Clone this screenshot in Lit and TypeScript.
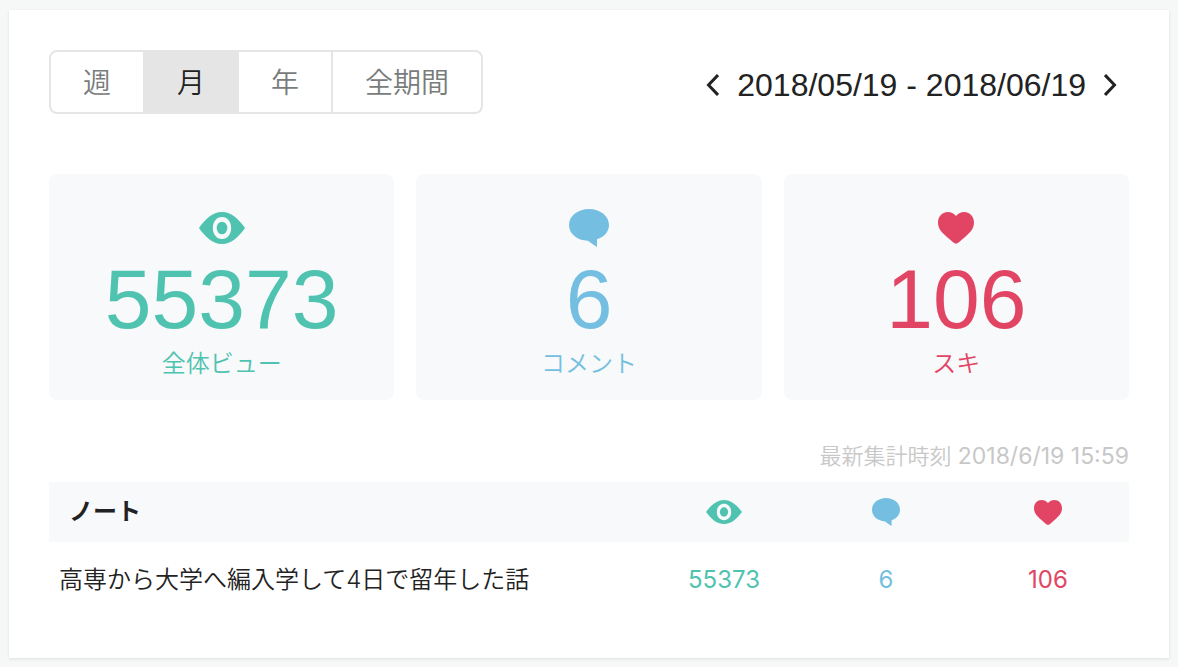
import { LitElement, html, css, svg } from "lit";
import { customElement, state } from "lit/decorators.js";

const eyeIcon = (w: number, h: number) => html`
  <svg width=${w} height=${h} viewBox="0 0 46 32" preserveAspectRatio="none" aria-hidden="true">
    ${svg`<path fill="currentColor" fill-rule="evenodd" d="M0 16C6 7.500 13.500 0 23 0S40 7.500 46 16C40 24.500 32.500 32 23 32S6 24.500 0 16ZM23 5C17.600 5 13.800 9.800 13.800 16S17.600 27 23 27S32.200 22.200 32.200 16S28.400 5 23 5Z"/>
    <ellipse fill="currentColor" cx="23" cy="16" rx="5.300" ry="6.300"/>`}
  </svg>`;

const commentIcon = (w: number, h: number) => html`
  <svg width=${w} height=${h} viewBox="0 0 40 38" preserveAspectRatio="none" aria-hidden="true">
    ${svg`<path fill="currentColor" d="M20 0C31 0 40 6.800 40 16C40 22.500 35.500 27.800 28 30.300V38C24.500 35.800 21.500 33.800 18.800 31.800C8.200 31.300 0 25 0 16C0 6.800 9 0 20 0Z"/>`}
  </svg>`;

const heartIcon = (w: number, h: number) => html`
  <svg width=${w} height=${h} viewBox="0 0 35 32" preserveAspectRatio="none" aria-hidden="true">
    ${svg`<path fill="currentColor" d="M17.500 3.900C19.700 1.300 22.400 0 25.300 0C30.800 0 35 4.300 35 10.500C35 16.800 31.200 20.500 26 25.200L20 30.600C18.300 32.100 16.700 32.100 15 30.600L9 25.200C3.800 20.500 0 16.800 0 10.500C0 4.300 4.200 0 9.700 0C12.600 0 15.300 1.300 17.500 3.900Z"/>`}
  </svg>`;

const PERIODS = ["週", "月", "年", "全期間"];

const METRICS = [
  { tone: "view", label: "全体ビュー", total: 55373, large: eyeIcon(46, 32), small: eyeIcon(36, 24) },
  { tone: "comment", label: "コメント", total: 6, large: commentIcon(40, 38), small: commentIcon(28, 28) },
  { tone: "like", label: "スキ", total: 106, large: heartIcon(36, 32), small: heartIcon(28, 25) },
];

const NOTES = [{ title: "高専から大学へ編入学して4日で留年した話", counts: [55373, 6, 106] }];

@customElement("app-root")
export class AppRoot extends LitElement {
  @state() private period = "月";

  static styles = css`
    :host {
      display: block;
      box-sizing: border-box;
      min-height: 100vh;
      padding: 10px 9px 9px;
      background: #f6f8f8;
      color: #222;
      font-family: Inter, "Noto Sans CJK JP", sans-serif;
      font-weight: 350;
    }
    * {
      box-sizing: border-box;
    }
    svg {
      display: block;
    }
    .panel {
      padding: 40px;
      background: #fff;
      box-shadow: 0 1px 3px rgba(0, 0, 0, 0.1);
    }
    .toolbar {
      display: flex;
      justify-content: space-between;
      align-items: flex-start;
      margin-bottom: 60px;
    }
    .periods {
      display: flex;
      border: 2px solid #e5e5e5;
      border-radius: 8px;
      overflow: hidden;
    }
    .period {
      height: 60px;
      padding: 0 32px 2px;
      border: 0;
      background: none;
      color: #787c7b;
      font: inherit;
      font-size: 28px;
      cursor: pointer;
    }
    .period + .period {
      border-left: 2px solid #e5e5e5;
    }
    .period.active {
      background: #e5e5e5;
      color: #222;
    }
    .range {
      display: flex;
      align-items: center;
      gap: 18px;
      padding: 15px 12px 0 0;
      font-family: "Liberation Sans", Arial, sans-serif;
      font-size: 32px;
      font-weight: 400;
      line-height: 40px;
    }
    .step {
      padding: 0;
      border: 0;
      background: none;
      color: inherit;
      cursor: pointer;
    }
    .totals {
      display: grid;
      grid-template-columns: repeat(3, 1fr);
      gap: 22px;
      margin-bottom: 40px;
    }
    .total {
      display: flex;
      flex-direction: column;
      align-items: center;
      padding: 30px 20px 18px;
      border-radius: 8px;
      background: #f7f9fa;
    }
    .icon {
      display: flex;
      align-items: center;
      height: 48px;
      margin-bottom: 5px;
    }
    .number {
      font-family: "Liberation Sans", Arial, sans-serif;
      font-size: 84px;
      font-weight: 400;
      line-height: 84px;
    }
    .label {
      margin-top: 5px;
      font-size: 24px;
      line-height: 36px;
    }
    .view {
      color: #50c3b0;
    }
    .comment {
      color: #74bfe1;
    }
    .like {
      color: #e24563;
    }
    .updated {
      margin: 0 0 10px;
      color: #c8c8c8;
      font-size: 22px;
      line-height: 32px;
      text-align: right;
    }
    .updated time {
      font-size: 23px;
      font-weight: 400;
    }
    .notes {
      width: 100%;
      border-collapse: collapse;
      table-layout: fixed;
      font-size: 24px;
      line-height: 36px;
    }
    .notes th {
      height: 60px;
      padding: 0;
      background: #f7f9fa;
    }
    .notes .name {
      padding-left: 20px;
      font-weight: 700;
      text-align: left;
    }
    .notes .metric {
      width: 15%;
    }
    .metric svg {
      margin: 0 auto;
    }
    .notes td {
      padding: 20px 0;
      font-weight: 400;
      text-align: center;
    }
    .notes .title {
      padding-left: 10px;
      font-weight: 350;
      text-align: left;
    }
    .link {
      color: inherit;
      text-decoration: none;
    }
  `;

  render() {
    return html`
      <main class="panel">
        <header class="toolbar">
          <div class="periods" role="group" aria-label="期間">
            ${PERIODS.map(
              (p) => html`<button
                type="button"
                class="period ${p === this.period ? "active" : ""}"
                aria-pressed=${p === this.period}
                @click=${() => (this.period = p)}
              >${p}</button>`
            )}
          </div>
          <div class="range">
            <button type="button" class="step" aria-label="前の期間">
              <svg width="13" height="22" viewBox="0 0 13 22" fill="none" stroke="currentColor" stroke-width="3"><path d="M12 1L2.500 11L12 21" /></svg>
            </button>
            <span>2018/05/19 - 2018/06/19</span>
            <button type="button" class="step" aria-label="次の期間">
              <svg width="13" height="22" viewBox="0 0 13 22" fill="none" stroke="currentColor" stroke-width="3"><path d="M1 1L10.500 11L1 21" /></svg>
            </button>
          </div>
        </header>

        <section class="totals">
          ${METRICS.map(
            (m) => html`<div class="total ${m.tone}">
              <div class="icon">${m.large}</div>
              <div class="number">${m.total}</div>
              <div class="label">${m.label}</div>
            </div>`
          )}
        </section>

        <p class="updated">最新集計時刻 <time datetime="2018-06-19T15:59">2018/6/19 15:59</time></p>

        <table class="notes">
          <thead>
            <tr>
              <th class="name" scope="col">ノート</th>
              ${METRICS.map((m) => html`<th class="metric ${m.tone}" scope="col" aria-label=${m.label}>${m.small}</th>`)}
            </tr>
          </thead>
          <tbody>
            ${NOTES.map(
              (n) => html`<tr>
                <td class="title"><a class="link" href="#">${n.title}</a></td>
                ${n.counts.map((c, i) => html`<td class=${METRICS[i].tone}>${c}</td>`)}
              </tr>`
            )}
          </tbody>
        </table>
      </main>
    `;
  }
}
